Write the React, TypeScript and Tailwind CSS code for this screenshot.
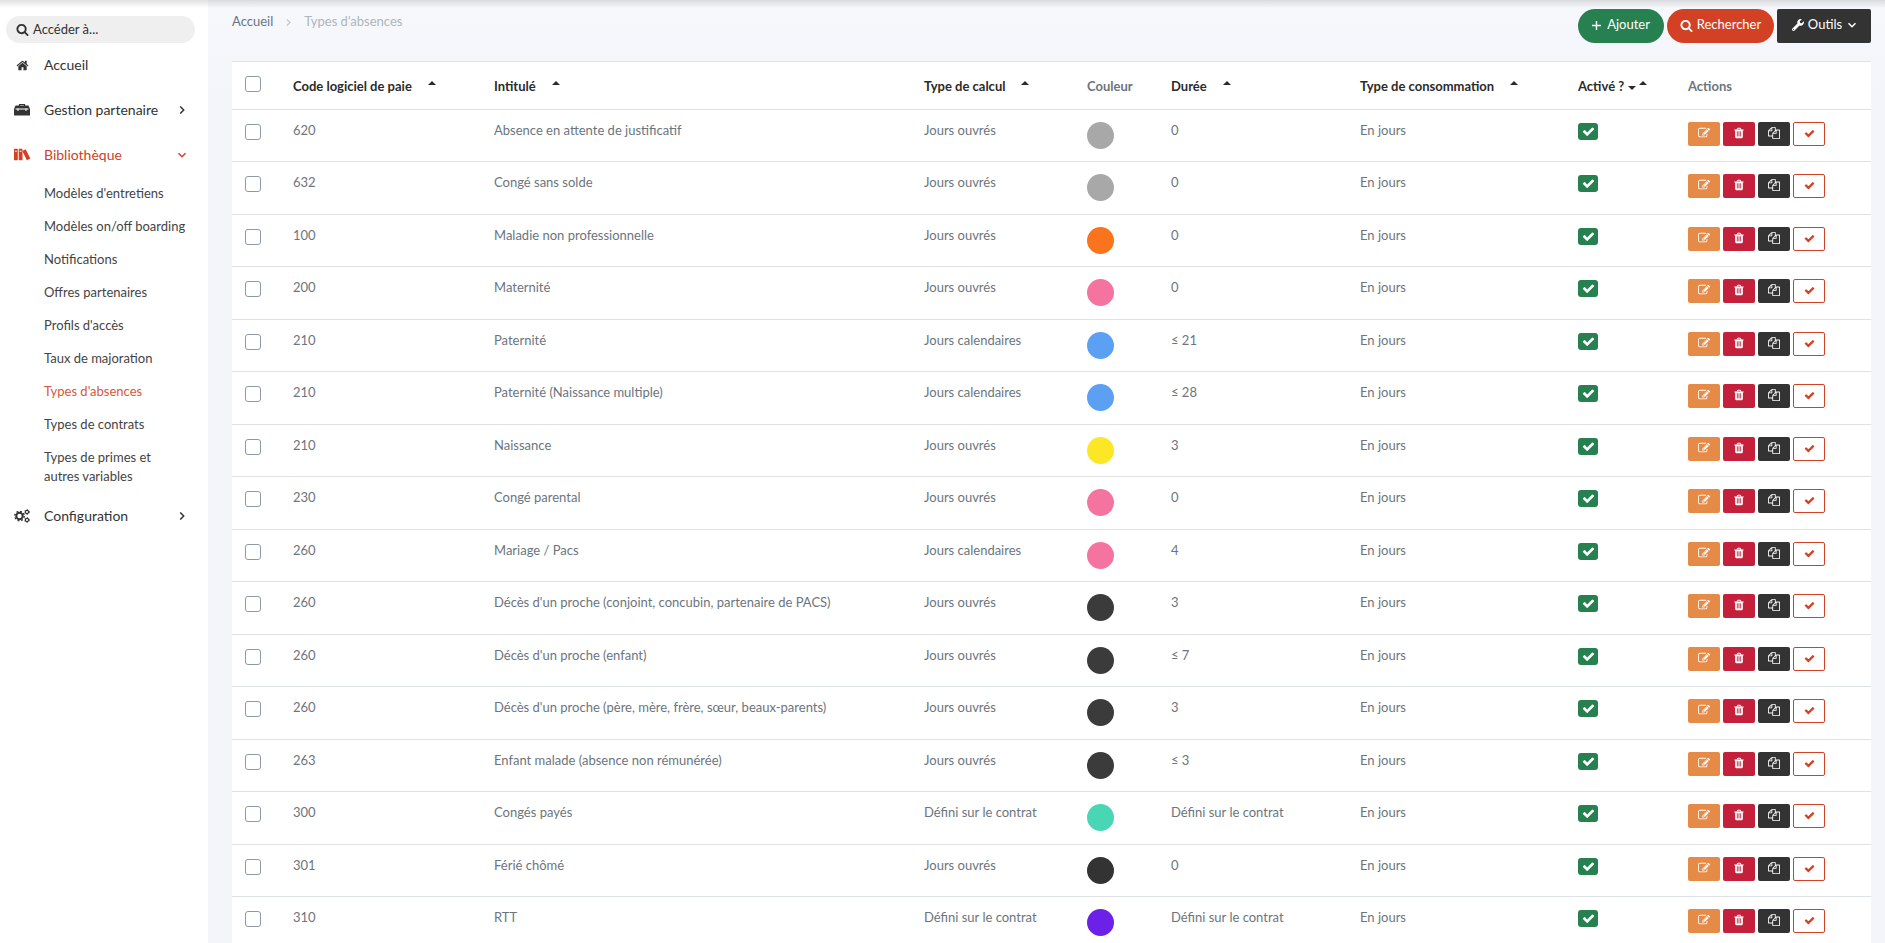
import { useState } from 'react'
import { FaWrench } from 'react-icons/fa'
import { ImBooks } from 'react-icons/im'

const GLYPHS = {
  search:
    'M1216 832q0-185-131.5-316.5t-316.5-131.5-316.5 131.5-131.5 316.5 131.5 316.5 316.5 131.5 316.5-131.5 131.5-316.5zm512 832q0 52-38 90t-90 38q-54 0-90-38l-343-342q-179 124-399 124-143 0-273.5-55.5t-225-150-150-225-55.5-273.5 55.5-273.5 150-225 225-150 273.5-55.5 273.5 55.5 225 150 150 225 55.5 273.5q0 220-124 399l343 343q37 37 37 90z',
  home:
    'M1472 992v480q0 26-19 45t-45 19h-384v-384h-256v384h-384q-26 0-45-19t-19-45v-480q0-1 .5-3t.5-3l575-474 575 474q1 2 1 6zm223-69l-62 74q-8 9-21 11h-3q-13 0-21-7l-692-577-692 577q-12 8-24 7-13-2-21-11l-62-74q-8-10-7-23.5t11-21.5l719-599q32-26 76-26t76 26l244 204v-195q0-14 9-23t23-9h192q14 0 23 9t9 23v408l219 182q10 8 11 21.5t-7 23.5z',
  edit:
    'M888 1184l116-116-152-152-116 116v56h96v96h56zm440-720q-16-16-33 1l-350 350q-17 17-1 33t33-1l350-350q17-17 1-33zm80 594v190q0 119-84.5 203.5t-203.5 84.5h-832q-119 0-203.5-84.5t-84.5-203.5v-832q0-119 84.5-203.5t203.5-84.5h832q63 0 117 25 15 7 18 23 3 17-9 29l-49 49q-14 14-32 8-23-6-45-6h-832q-66 0-113 47t-47 113v832q0 66 47 113t113 47h832q66 0 113-47t47-113v-126q0-13 9-22l64-64q15-15 35-7t20 29zm-96-738l288 288-672 672h-288v-288zm444 132l-92 92-288-288 92-92q28-28 68-28t68 28l152 152q28 28 28 68t-28 68z',
  trash:
    'M704 1376v-704q0-14-9-23t-23-9h-64q-14 0-23 9t-9 23v704q0 14 9 23t23 9h64q14 0 23-9t9-23zm256 0v-704q0-14-9-23t-23-9h-64q-14 0-23 9t-9 23v704q0 14 9 23t23 9h64q14 0 23-9t9-23zm256 0v-704q0-14-9-23t-23-9h-64q-14 0-23 9t-9 23v704q0 14 9 23t23 9h64q14 0 23-9t9-23zm-544-992h448l-48-117q-7-9-17-11h-317q-10 2-17 11zm928 32v64q0 14-9 23t-23 9h-96v948q0 83-47 143.5t-113 60.5h-832q-66 0-113-58.5t-47-141.5v-952h-96q-14 0-23-9t-9-23v-64q0-14 9-23t23-9h309l70-167q15-37 54-63t79-26h320q40 0 79 26t54 63l70 167h309q14 0 23 9t9 23z',
  copy:
    'M1696 384q40 0 68 28t28 68v1216q0 40-28 68t-68 28h-960q-40 0-68-28t-28-68v-288h-544q-40 0-68-28t-28-68v-672q0-40 20-88t48-76l408-408q28-28 76-48t88-20h416q40 0 68 28t28 68v328q68-40 128-40h416zm-544 213l-299 299h299v-299zm-640-384l-299 299h299v-299zm196 647l316-316v-416h-384v416q0 40-28 68t-68 28h-416v640h512v-256q0-40 20-88t48-76zm956 804v-1152h-384v416q0 40-28 68t-68 28h-416v640h896z',
  check:
    'M1671 566q0 40-28 68l-724 724-136 136q-28 28-68 28t-68-28l-136-136-362-362q-28-28-28-68t28-68l136-136q28-28 68-28t68 28l294 295 656-657q28-28 68-28t68 28l136 136q28 28 28 68z',
}

function Glyph({ name, size }: { name: keyof typeof GLYPHS; size: number }) {
  return (
    <svg width={size} height={size} viewBox="0 0 1792 1792" fill="currentColor" aria-hidden="true">
      <path d={GLYPHS[name]} />
    </svg>
  )
}

function Toolbox() {
  return (
    <svg width="16" height="13" viewBox="0 0 16 13" aria-hidden="true">
      <path d="M5.5 3V1.500h5V3" fill="none" stroke="currentColor" strokeWidth="1.200" />
      <path d="M1.500 2.500h13L16 6v6.500H0V6z" fill="currentColor" />
      <path d="M1.500 6h13M4 5.500v2.500M12 5.500v2.500" fill="none" stroke="#fff" strokeWidth="1" />
    </svg>
  )
}

function Cogs() {
  return (
    <svg width="16" height="14" viewBox="0 0 16 14" fill="none" stroke="currentColor" aria-hidden="true">
      <circle cx="5.5" cy="7" r="3.2" strokeWidth="2" />
      <circle cx="5.5" cy="7" r="4.7" strokeWidth="1.4" strokeDasharray="1.85 1.84" />
      <circle cx="13" cy="3" r="1.6" strokeWidth="1.1" />
      <circle cx="13" cy="3" r="2.4" strokeWidth="0.9" strokeDasharray="1.25 1.26" />
      <circle cx="13" cy="11" r="1.6" strokeWidth="1.1" />
      <circle cx="13" cy="11" r="2.4" strokeWidth="0.9" strokeDasharray="1.25 1.26" />
    </svg>
  )
}

function Chevron({ down = false, size = 8 }: { down?: boolean; size?: number }) {
  return (
    <svg
      width={size}
      height={size}
      viewBox="0 0 8 8"
      fill="none"
      stroke="currentColor"
      strokeWidth="1.5"
      aria-hidden="true"
    >
      <path d={down ? 'M0.5 2.2 4 5.7 7.5 2.2' : 'M2.2 0.5 5.7 4 2.2 7.5'} />
    </svg>
  )
}

function Caret({ down = false }: { down?: boolean }) {
  return (
    <svg width="8" height="4" viewBox="0 0 8 4" fill="currentColor" aria-hidden="true">
      <path d={down ? 'M0 0h8L4 4z' : 'M0 4h8L4 0z'} />
    </svg>
  )
}

const SUB_ITEMS = [
  "Modèles d'entretiens",
  'Modèles on/off boarding',
  'Notifications',
  'Offres partenaires',
  "Profils d'accès",
  'Taux de majoration',
  "Types d'absences",
  'Types de contrats',
  'Types de primes et autres variables',
]

const ROWS = [
  { code: '620', label: 'Absence en attente de justificatif', calc: 'Jours ouvrés', color: 'bg-[#a8a8a8]', days: '0' },
  { code: '632', label: 'Congé sans solde', calc: 'Jours ouvrés', color: 'bg-[#a8a8a8]', days: '0' },
  { code: '100', label: 'Maladie non professionnelle', calc: 'Jours ouvrés', color: 'bg-[#f9741c]', days: '0' },
  { code: '200', label: 'Maternité', calc: 'Jours ouvrés', color: 'bg-[#f4749f]', days: '0' },
  { code: '210', label: 'Paternité', calc: 'Jours calendaires', color: 'bg-[#5ba0f2]', days: '≤ 21' },
  { code: '210', label: 'Paternité (Naissance multiple)', calc: 'Jours calendaires', color: 'bg-[#5ba0f2]', days: '≤ 28' },
  { code: '210', label: 'Naissance', calc: 'Jours ouvrés', color: 'bg-[#fce727]', days: '3' },
  { code: '230', label: 'Congé parental', calc: 'Jours ouvrés', color: 'bg-[#f4749f]', days: '0' },
  { code: '260', label: 'Mariage / Pacs', calc: 'Jours calendaires', color: 'bg-[#f4749f]', days: '4' },
  { code: '260', label: "Décès d'un proche (conjoint, concubin, partenaire de PACS)", calc: 'Jours ouvrés', color: 'bg-[#3b3b3b]', days: '3' },
  { code: '260', label: "Décès d'un proche (enfant)", calc: 'Jours ouvrés', color: 'bg-[#3b3b3b]', days: '≤ 7' },
  { code: '260', label: "Décès d'un proche (père, mère, frère, sœur, beaux-parents)", calc: 'Jours ouvrés', color: 'bg-[#3b3b3b]', days: '3' },
  { code: '263', label: 'Enfant malade (absence non rémunérée)', calc: 'Jours ouvrés', color: 'bg-[#3b3b3b]', days: '≤ 3' },
  { code: '300', label: 'Congés payés', calc: 'Défini sur le contrat', color: 'bg-[#49d6b5]', days: 'Défini sur le contrat' },
  { code: '301', label: 'Férié chômé', calc: 'Jours ouvrés', color: 'bg-[#333333]', days: '0' },
  { code: '310', label: 'RTT', calc: 'Défini sur le contrat', color: 'bg-[#6b21e8]', days: 'Défini sur le contrat' },
]

const COLUMNS = [
  { title: 'Code logiciel de paie', sortable: true },
  { title: 'Intitulé', sortable: true },
  { title: 'Type de calcul', sortable: true },
  { title: 'Couleur', sortable: false },
  { title: 'Durée', sortable: true },
  { title: 'Type de consommation', sortable: true },
  { title: 'Activé ?', sortable: true, active: true },
  { title: 'Actions', sortable: false },
]

const checkboxClass =
  'block size-4 appearance-none rounded-[3px] border border-[#8d9aa5] bg-white checked:bg-[#27804f]'

function Sidebar() {
  const [open, setOpen] = useState(true)

  return (
    <aside className="w-52 shrink-0 bg-white pt-4 text-[#333]">
      <button className="ml-1.5 flex h-[27px] w-[189px] items-center gap-1 rounded-full bg-[#efefef] pl-2.5 text-[13px]">
        <Glyph name="search" size={13} />
        Accéder à...
      </button>
      <nav className="text-sm">
        <a href="#accueil" className="flex h-11 items-center">
          <span className="flex w-11 justify-center">
            <Glyph name="home" size={13} />
          </span>
          Accueil
        </a>
        <button className="flex h-[45px] w-full items-center">
          <span className="flex w-11 justify-center">
            <Toolbox />
          </span>
          <span className="flex-1 text-left">Gestion partenaire</span>
          <span className="mr-[22px]">
            <Chevron />
          </span>
        </button>
        <button onClick={() => setOpen(!open)} className="flex h-[45px] w-full items-center text-[#d24123]">
          <span className="flex w-11 justify-center">
            <ImBooks size={17} />
          </span>
          <span className="flex-1 text-left">Bibliothèque</span>
          <span className="mr-[22px]">
            <Chevron down={open} />
          </span>
        </button>
        {open && (
          <ul className="pr-4 pl-11 text-[13px] leading-[19px]">
            {SUB_ITEMS.map(item => (
              <li key={item} className="max-w-[145px] py-[7px]">
                <a href="#" className={item === "Types d'absences" ? 'text-[#d8563c]' : 'text-[#444]'}>
                  {item}
                </a>
              </li>
            ))}
          </ul>
        )}
        <button className="flex h-[45px] w-full items-center">
          <span className="flex w-11 justify-center">
            <Cogs />
          </span>
          <span className="flex-1 text-left">Configuration</span>
          <span className="mr-[22px]">
            <Chevron />
          </span>
        </button>
      </nav>
    </aside>
  )
}

function Toolbar() {
  return (
    <header className="flex h-[61px] items-start justify-between pt-[9px]">
      <nav className="flex h-[26px] items-center text-[13px] text-[#6c757d]">
        <a href="#accueil">Accueil</a>
        <span className="mx-3 text-[#c3cad0]">
          <Chevron size={7} />
        </span>
        <span className="text-[#adb5bd]">Types d'absences</span>
      </nav>
      <div className="flex gap-[3px] text-[13px] text-white">
        <button className="flex h-[34px] w-[86px] items-center justify-center gap-1.5 rounded-full bg-[#27804f] pb-0.5">
          <svg width="9" height="9" viewBox="0 0 9 9" stroke="currentColor" strokeWidth="1.4" aria-hidden="true">
            <path d="M4.5 0v9M0 4.5h9" />
          </svg>
          Ajouter
        </button>
        <button className="flex h-[34px] w-[107px] items-center justify-center gap-1 rounded-full bg-[#d24123] pb-0.5">
          <Glyph name="search" size={13} />
          Rechercher
        </button>
        <button className="flex h-[34px] w-[94px] items-center justify-center gap-1 rounded-xs bg-[#333] pb-0.5">
          <FaWrench size={12} />
          Outils
          <span className="ml-0.5">
            <Chevron down />
          </span>
        </button>
      </div>
    </header>
  )
}

function AbsenceTable() {
  return (
    <table className="w-full min-w-[1400px] table-fixed border-separate border-spacing-0 border-t border-[#dee2e6] bg-white text-left text-[13px] leading-5 text-[#6c757d]">
      <colgroup>
        <col className="w-[49px]" />
        <col className="w-[201px]" />
        <col />
        <col className="w-[163px]" />
        <col className="w-[84px]" />
        <col className="w-[189px]" />
        <col className="w-[218px]" />
        <col className="w-[110px]" />
        <col className="w-[195px]" />
      </colgroup>
      <thead>
        <tr className="h-12">
          <th className="border-b border-[#dee2e6] pr-2 pb-1 pl-[13px]">
            <input type="checkbox" aria-label="Tout sélectionner" className={checkboxClass} />
          </th>
          {COLUMNS.map(col => (
            <th key={col.title} className="border-b border-[#dee2e6] px-3 font-bold">
              {col.sortable ? (
                <button className="flex items-center text-[#2b2b2b]">
                  {col.title}
                  {col.active ? (
                    <span className="ml-1 flex items-center gap-[3px]">
                      <span className="pt-1">
                        <Caret down />
                      </span>
                      <span className="pb-1.5">
                        <Caret />
                      </span>
                    </span>
                  ) : (
                    <span className="ml-4 pb-1.5">
                      <Caret />
                    </span>
                  )}
                </button>
              ) : (
                col.title
              )}
            </th>
          ))}
        </tr>
      </thead>
      <tbody>
        {ROWS.map((row, i) => (
          <tr key={i} className="h-[52px] align-top even:h-[53px] *:border-b *:border-[#dee2e6] *:px-3 *:pt-2.5">
            <td>
              <input type="checkbox" aria-label={row.label} className={`mt-1 ml-px ${checkboxClass}`} />
            </td>
            <td>{row.code}</td>
            <td>{row.label}</td>
            <td>{row.calc}</td>
            <td>
              <span className={`mt-0.5 block size-[27px] rounded-full ${row.color}`} />
            </td>
            <td>{row.days}</td>
            <td>En jours</td>
            <td>
              <span className="mt-[3px] flex h-[17px] w-5 items-center justify-center rounded-[3px] bg-[#27804f] text-white">
                <Glyph name="check" size={13} />
              </span>
            </td>
            <td>
              <div className="mt-0.5 flex gap-[3px] text-white *:flex *:h-6 *:w-8 *:items-center *:justify-center *:rounded-xs *:pb-0.5">
                <button aria-label="Modifier" className="bg-[#e58a47]">
                  <Glyph name="edit" size={12} />
                </button>
                <button aria-label="Supprimer" className="bg-[#c5203b]">
                  <Glyph name="trash" size={12} />
                </button>
                <button aria-label="Dupliquer" className="bg-[#333]">
                  <Glyph name="copy" size={12} />
                </button>
                <button aria-label="Activer" className="border border-[#d24123] bg-white text-[#d24123]">
                  <Glyph name="check" size={11} />
                </button>
              </div>
            </td>
          </tr>
        ))}
      </tbody>
    </table>
  )
}

export default function App() {
  return (
    <div className="relative flex h-screen overflow-hidden bg-[#f4f5fa] font-['Lato',sans-serif]">
      <Sidebar />
      <main className="min-w-0 flex-1 overflow-auto bg-linear-to-b from-[#f7f8fc] to-[#f4f5fa] to-10% pr-3.5 pl-6 [scrollbar-width:none]">
        <Toolbar />
        <AbsenceTable />
      </main>
      <div className="pointer-events-none absolute inset-x-0 top-0 h-2 bg-linear-to-b from-black/12 to-transparent" />
    </div>
  )
}
